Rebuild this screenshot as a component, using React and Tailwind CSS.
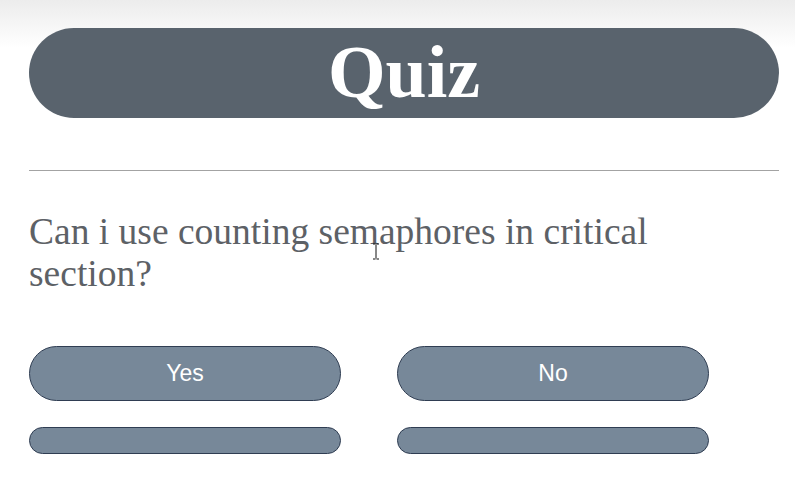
import React from 'react'

const ANSWERS = ['Yes', 'No']

export default function App() {
  return (
    <div className="relative min-h-screen w-full bg-[linear-gradient(to_bottom,#ececec_0px,#ffffff_48px)] pt-[28px]">
      <div className="ml-[29px] w-[750px]">
        {/* Title bar */}
        <div className="flex h-[90px] items-center justify-center rounded-full bg-[#59636d]">
          <h1 className="mt-[-2px] font-['Liberation_Serif',serif] text-[74px] font-bold leading-none text-white">Quiz</h1>
        </div>

        <hr className="mt-[52px] border-0 border-t border-[#a3a3a3]" />

        {/* Question */}
        <p className="mt-[40px] max-w-[700px] font-['Liberation_Serif',serif] text-[37.5px] leading-[42px] text-[#5d6166]">
          Can i use counting semaphores in critical section?
        </p>

        {/* Answers */}
        <div className="mt-[51px] grid w-[680px] grid-cols-2 gap-x-[56px] gap-y-[26px]">
          {ANSWERS.map(a => (
            <button
              key={a}
              className="flex h-[55px] items-center justify-center rounded-full border border-[#2f3d52] bg-[#778899] font-['Liberation_Sans',sans-serif] text-[23px] text-white"
            >
              {a}
            </button>
          ))}
          <div className="h-[27px] rounded-full border border-[#2f3d52] bg-[#778899]" />
          <div className="h-[27px] rounded-full border border-[#2f3d52] bg-[#778899]" />
        </div>
      </div>

      {/* mouse cursor */}
      <svg className="absolute left-[372px] top-[243px]" width="8" height="17" viewBox="0 0 8 17">
        <path d="M1 1h2.5M4.5 1H7M4 1.5v14M1 16h2.5M4.5 16H7" stroke="#111" strokeWidth="1" fill="none" />
      </svg>
    </div>
  )
}
